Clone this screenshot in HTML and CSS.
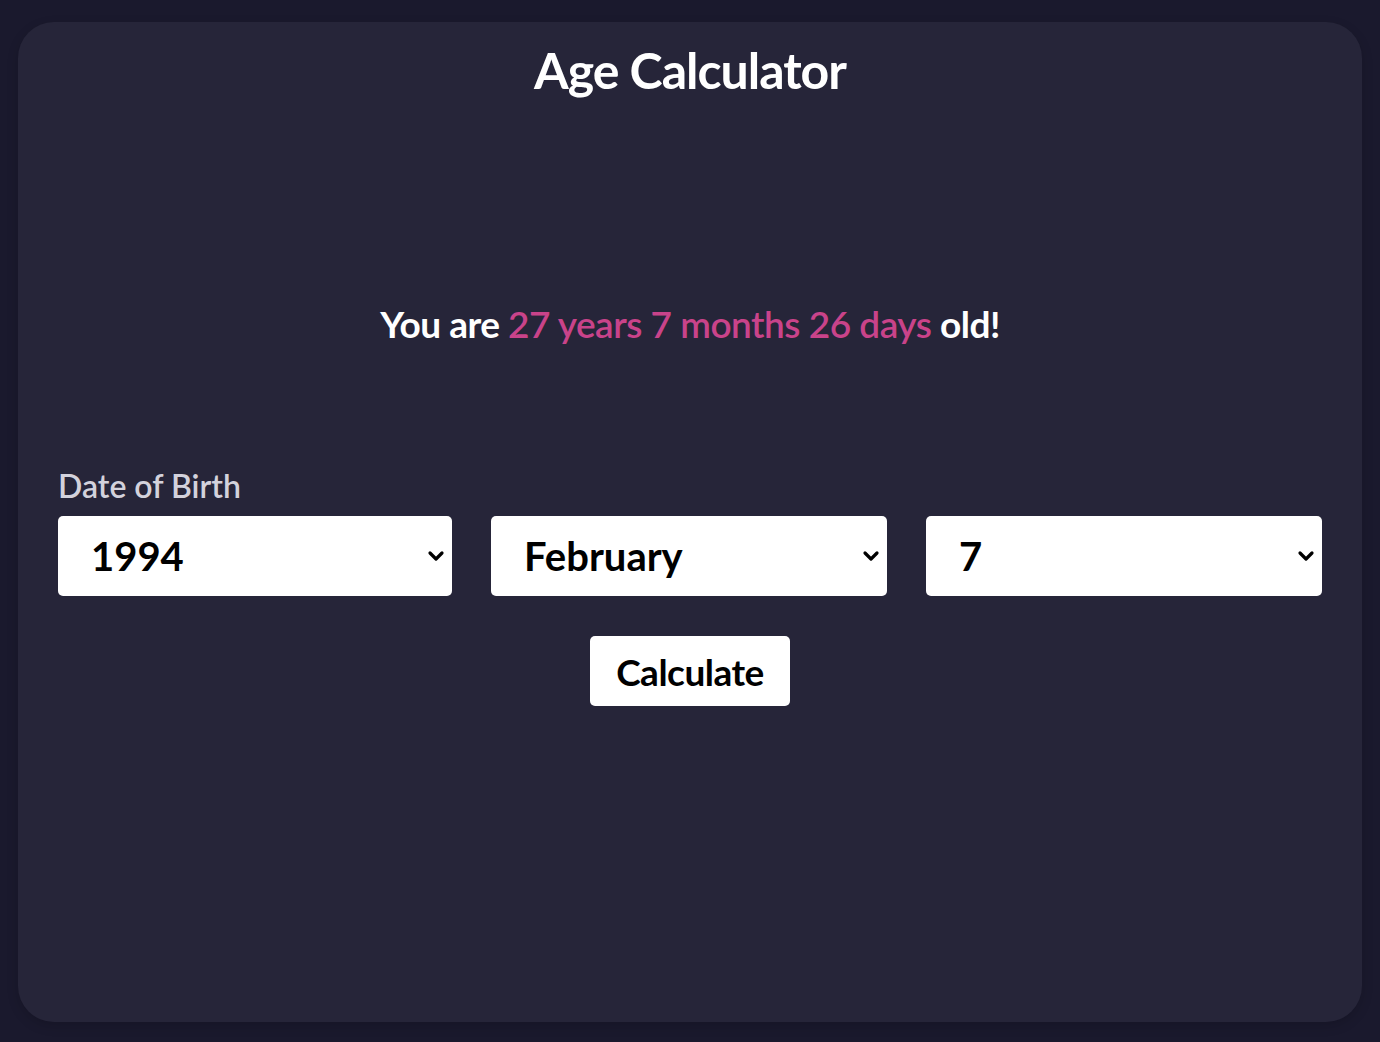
FILE: index.html
```html
<!DOCTYPE html>
<html lang="en">
<head>
<meta charset="utf-8">
<title>Age Calculator</title>
<link rel="stylesheet" href="styles.css">
</head>
<body>
<main class="card">
  <h1 class="title">Age Calculator</h1>
  <p class="result">You are <span class="age">27 years 7 months 26 days</span> old!</p>
  <section class="form">
    <label class="label">Date of Birth</label>
    <div class="row">
      <div class="select-wrap">
        <select class="select"><option>1994</option></select>
        <svg class="chev" viewBox="0 0 18 14" width="18" height="14"><path d="M3 4 L9 10 L15 4" fill="none" stroke="#000" stroke-width="3.2" stroke-linecap="round" stroke-linejoin="round"/></svg>
      </div>
      <div class="select-wrap">
        <select class="select"><option>February</option></select>
        <svg class="chev" viewBox="0 0 18 14" width="18" height="14"><path d="M3 4 L9 10 L15 4" fill="none" stroke="#000" stroke-width="3.2" stroke-linecap="round" stroke-linejoin="round"/></svg>
      </div>
      <div class="select-wrap">
        <select class="select"><option>7</option></select>
        <svg class="chev" viewBox="0 0 18 14" width="18" height="14"><path d="M3 4 L9 10 L15 4" fill="none" stroke="#000" stroke-width="3.2" stroke-linecap="round" stroke-linejoin="round"/></svg>
      </div>
    </div>
    <div class="actions">
      <button class="btn">Calculate</button>
    </div>
  </section>
</main>
</body>
</html>
```

FILE: styles.css
```css
* { box-sizing: border-box; }
html, body { height: 100%; }
body {
  margin: 0;
  background: #1a192d;
  font-family: "Lato", "Noto Sans", sans-serif;
  padding: 22px 18px 20px 18px;
}
.card {
  background: #262539;
  border-radius: 36px;
  height: 1000px;
  padding: 22px 40px 0 40px;
  box-shadow: 0 4px 12px rgba(0,0,0,0.15);
}
.title {
  margin: 0;
  text-align: center;
  color: #fff;
  font-size: 50px;
  font-weight: 700;
  line-height: 52px;
  letter-spacing: -1px;
}
.result {
  margin: 203px 0 0 0;
  text-align: center;
  color: #fff;
  font-size: 37px;
  font-weight: 700;
  line-height: 50px;
  letter-spacing: -0.5px;
}
.age {
  color: #c9438a;
  font-weight: 600;
}
.form {
  margin-top: 119px;
}
.label {
  display: block;
  color: #d3d2dc;
  font-size: 32px;
  font-weight: 600;
  line-height: 36px;
  margin-bottom: 12px;
}
.row {
  display: grid;
  grid-template-columns: 394px 396px 396px;
  justify-content: space-between;
}
.select-wrap {
  position: relative;
}
.select {
  appearance: none;
  -webkit-appearance: none;
  width: 100%;
  height: 80px;
  border: none;
  border-radius: 5px;
  background: #fff;
  color: #000;
  font-family: inherit;
  font-size: 40px;
  font-weight: 700;
  padding: 0 0 0 33px;
  outline: none;
}
.chev {
  position: absolute;
  right: 7px;
  top: 33px;
  pointer-events: none;
}
.actions {
  display: flex;
  justify-content: center;
  margin-top: 40px;
}
.btn {
  width: 200px;
  height: 70px;
  border: none;
  border-radius: 5px;
  background: #fff;
  color: #000;
  font-family: inherit;
  font-size: 37px;
  font-weight: 700;
  letter-spacing: -0.5px;
  padding: 0;
}
```
